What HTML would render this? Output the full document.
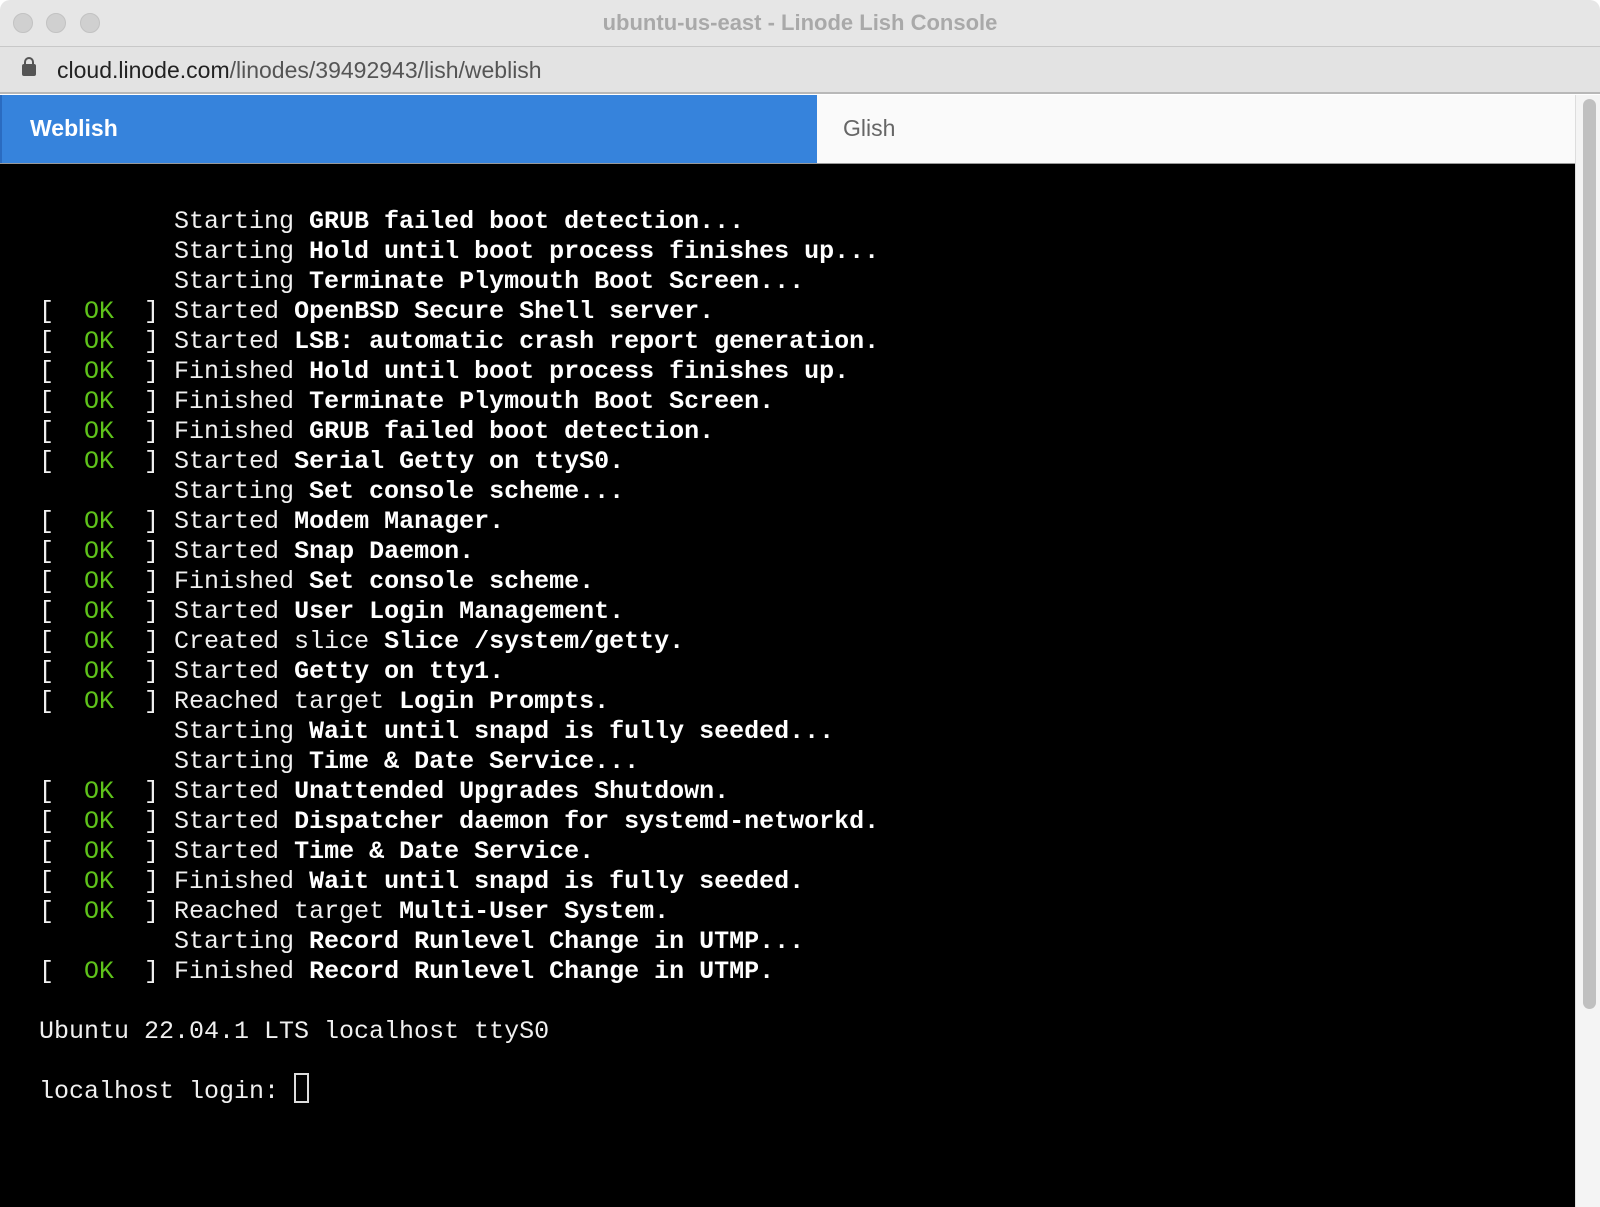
<!DOCTYPE html>
<html><head><meta charset="utf-8"><style>
*{margin:0;padding:0;box-sizing:border-box}
body{width:1600px;height:1207px;overflow:hidden;background:#fff;font-family:"Liberation Sans",sans-serif;position:relative}
.title{position:absolute;left:0;top:0;width:1600px;height:46px;background:#e6e6e6;text-align:center;line-height:46px;font-size:22px;font-weight:bold;color:#a9a9a9;border-radius:10px 10px 0 0}
.dot{position:absolute;top:13px;width:20px;height:20px;border-radius:50%;background:#d0d0d0;border:1px solid #c2c2c2}
.url{position:absolute;left:0;top:46px;width:1600px;height:48px;background:#e3e3e3;border-top:1px solid #c8c8c8;border-bottom:2px solid #b8b8b8;font-size:23px;line-height:46px;color:#555;padding-left:57px}
.url b{font-weight:normal;color:#222}
.lock{position:absolute;left:22px;top:17px;width:14px;height:12px;background:#555;border-radius:2px}
.lock:before{content:"";position:absolute;left:2px;top:-7px;width:6px;height:8px;border:2px solid #555;border-bottom:none;border-radius:5px 5px 0 0}
.tabs{position:absolute;left:0;top:95px;width:1575px;height:69px;background:#fafafa;border-bottom:1px solid #999}
.tab1{position:absolute;left:0;top:0;width:817px;height:68px;background:#3683dc;color:#fff;font-size:23px;font-weight:bold;line-height:66px;padding-left:28px;border-left:2px solid #2a6bc0}
.tab2{position:absolute;left:843px;top:0;font-size:23px;line-height:66px;color:#666}
.term{position:absolute;left:0;top:164px;width:1575px;height:1043px;background:#000;color:#f0f0f0;font-family:"Liberation Mono",monospace;font-size:25px;line-height:30px;padding:43px 0 0 39px;white-space:pre}
.term b{font-weight:bold;color:#fff}
.g{color:#5ec21a}
.cur{position:relative;display:inline-block;width:15px;height:20px;vertical-align:0}
.cur:after{content:"";position:absolute;left:0;top:-5px;width:15px;height:30px;border:2px solid #ddd;box-sizing:border-box}
.sb{position:absolute;left:1575px;top:95px;width:25px;height:1112px;background:#f4f4f4;border-left:1px solid #ddd}
.sb div{position:absolute;left:7px;top:4px;width:13px;height:910px;background:#c0c0c0;border-radius:7px}
</style></head><body>
<div class="title">ubuntu-us-east - Linode Lish Console</div>
<div class="dot" style="left:13px"></div><div class="dot" style="left:46px"></div><div class="dot" style="left:80px"></div>
<div class="url"><span class="lock"></span><b>cloud.linode.com</b>/linodes/39492943/lish/weblish</div>
<div class="tabs"><div class="tab1">Weblish</div><div class="tab2">Glish</div></div>
<div class="sb"><div></div></div>
<div class="term">         Starting <b>GRUB failed boot detection...</b>
         Starting <b>Hold until boot process finishes up...</b>
         Starting <b>Terminate Plymouth Boot Screen...</b>
[  <span class="g">OK</span>  ] Started <b>OpenBSD Secure Shell server.</b>
[  <span class="g">OK</span>  ] Started <b>LSB: automatic crash report generation.</b>
[  <span class="g">OK</span>  ] Finished <b>Hold until boot process finishes up.</b>
[  <span class="g">OK</span>  ] Finished <b>Terminate Plymouth Boot Screen.</b>
[  <span class="g">OK</span>  ] Finished <b>GRUB failed boot detection.</b>
[  <span class="g">OK</span>  ] Started <b>Serial Getty on ttyS0.</b>
         Starting <b>Set console scheme...</b>
[  <span class="g">OK</span>  ] Started <b>Modem Manager.</b>
[  <span class="g">OK</span>  ] Started <b>Snap Daemon.</b>
[  <span class="g">OK</span>  ] Finished <b>Set console scheme.</b>
[  <span class="g">OK</span>  ] Started <b>User Login Management.</b>
[  <span class="g">OK</span>  ] Created slice <b>Slice /system/getty.</b>
[  <span class="g">OK</span>  ] Started <b>Getty on tty1.</b>
[  <span class="g">OK</span>  ] Reached target <b>Login Prompts.</b>
         Starting <b>Wait until snapd is fully seeded...</b>
         Starting <b>Time &amp; Date Service...</b>
[  <span class="g">OK</span>  ] Started <b>Unattended Upgrades Shutdown.</b>
[  <span class="g">OK</span>  ] Started <b>Dispatcher daemon for systemd-networkd.</b>
[  <span class="g">OK</span>  ] Started <b>Time &amp; Date Service.</b>
[  <span class="g">OK</span>  ] Finished <b>Wait until snapd is fully seeded.</b>
[  <span class="g">OK</span>  ] Reached target <b>Multi-User System.</b>
         Starting <b>Record Runlevel Change in UTMP...</b>
[  <span class="g">OK</span>  ] Finished <b>Record Runlevel Change in UTMP.</b>

Ubuntu 22.04.1 LTS localhost ttyS0

localhost login: <span class="cur"></span></div>
</body></html>
